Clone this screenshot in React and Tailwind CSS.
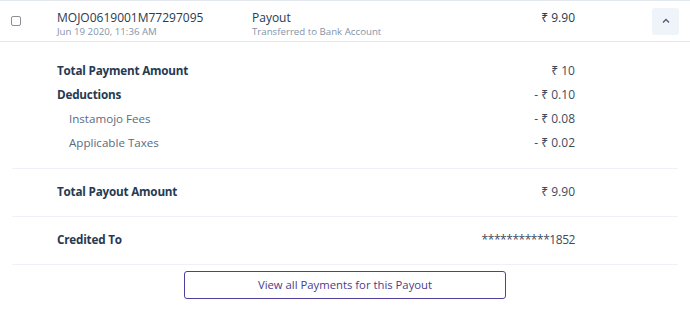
import React from "react";

const font = { fontFamily: '"Open Sans", "Noto Sans", sans-serif' };

function Row({ label, value, bold, tight }) {
  return (
    <div className="flex items-center justify-between h-[24px] pl-[45px] pr-[103px]">
      <span
        className={
          bold
            ? "text-[11.7px] font-bold text-[#253a52] tracking-[-0.2px]"
            : "text-[11.6px] text-[#5b6b80] pl-[12px]"
        }
      >
        {label}
      </span>
      <span className={tight ? "text-[12px] text-[#3d4b5e] tracking-[-0.45px]" : "text-[12px] text-[#3d4b5e]"}>{value}</span>
    </div>
  );
}

export default function App() {
  return (
    <div style={font} className="w-[690px] h-[311px] bg-white overflow-hidden">
      <div className="flex items-center h-[42px] border-t border-b border-[#e3e8ef]">
        <div className="w-[57px] flex items-center pl-[11px]">
          <div className="w-[10px] h-[10px] border border-[#8a8f96] rounded-[2px] bg-white" />
        </div>
        <div className="w-[195px] self-start pt-[8px] flex flex-col">
          <span className="text-[12px] text-[#2a3a50] leading-[17px]">MOJO0619001M77297095</span>
          <span className="text-[9.7px] text-[#8494a8] leading-[12px]">Jun 19 2020, 11:36 AM</span>
        </div>
        <div className="flex-1 self-start pt-[8px] flex flex-col">
          <span className="text-[12px] text-[#2a3a50] leading-[17px]">Payout</span>
          <span className="text-[9.7px] text-[#8494a8] leading-[12px]">Transferred to Bank Account</span>
        </div>
        <div className="self-start pt-[8px] text-[12px] text-[#2a3a50] pr-[77px]">₹ 9.90</div>
        <div className="w-[27px] h-[27px] mr-[11px] rounded-[3px] bg-[#eff4fb] flex items-center justify-center">
          <svg width="8" height="6" viewBox="0 0 8 6">
            <path d="M1 4.5 L4 1.5 L7 4.5" fill="none" stroke="#4a5c72" strokeWidth="1.3" />
          </svg>
        </div>
      </div>
      <div className="mx-[12px]">
        <div className="pt-[17px] pb-[13px] border-b border-[#eef1f5]">
          <Row label="Total Payment Amount" value="₹ 10" bold />
          <Row label="Deductions" value="- ₹ 0.10" bold />
          <Row label="Instamojo Fees" value="- ₹ 0.08" />
          <Row label="Applicable Taxes" value="- ₹ 0.02" />
        </div>
        <div className="h-[48px] pb-[2px] flex items-center border-b border-[#eef1f5]">
          <div className="w-full">
            <Row label="Total Payout Amount" value="₹ 9.90" bold />
          </div>
        </div>
        <div className="h-[48px] pb-[2px] flex items-center border-b border-[#eef1f5]">
          <div className="w-full">
            <Row label="Credited To" value="***********1852" bold tight />
          </div>
        </div>
        <div className="flex justify-center pt-[6px]">
          <button className="w-[322px] h-[28px] border border-[#4f3f9a] rounded-[3px] text-[11.3px] text-[#4a3c8e] bg-white">
            View all Payments for this Payout
          </button>
        </div>
      </div>
    </div>
  );
}
